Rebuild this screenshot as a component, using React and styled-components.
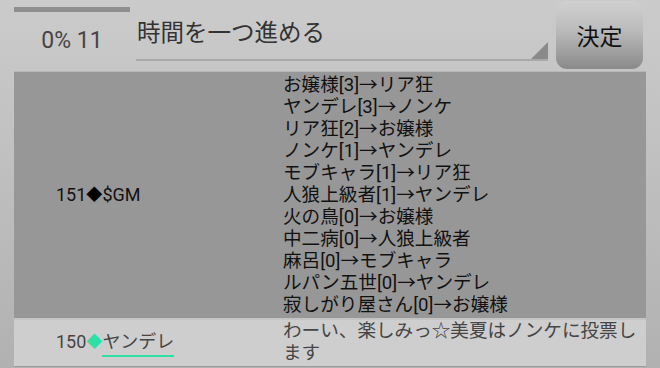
import React from 'react'
import styled, { createGlobalStyle } from 'styled-components'

const GlobalStyle = createGlobalStyle`
  html, body {
    margin: 0;
    padding: 0;
  }
  body {
    width: 660px;
    height: 368px;
    overflow: hidden;
    background: linear-gradient(#cbcbcb 0%, #c6c6c6 20%, #b1b1b1 100%);
    font-family: Roboto, "Noto Sans CJK JP", sans-serif;
  }
`

const Page = styled.div`
  padding: 0 14px;
`

const Header = styled.div`
  display: flex;
  align-items: stretch;
  height: 71px;
`

const Progress = styled.div`
  width: 122px;
  display: flex;
  flex-direction: column;
  align-items: center;
`

const ProgressTrack = styled.div`
  align-self: flex-start;
  margin-top: 7px;
  width: 116px;
  height: 5px;
  background: #8f8f8f;
`

const ProgressLabel = styled.div`
  margin-top: 15px;
  margin-right: 6px;
  font-size: 23px;
  color: #454545;
`

const Field = styled.div`
  position: relative;
  width: 412px;
  height: 61px;
  border-bottom: 2px solid #a9a9a9;
  box-sizing: border-box;
  font-family: "Noto Sans CJK JP", sans-serif;
  font-size: 23.5px;
  color: #333;
  padding-left: 1px;
`

const FieldText = styled.div`
  line-height: 1;
  margin-top: 20px;
`

const Corner = styled.div`
  position: absolute;
  right: 0;
  bottom: 0;
  width: 0;
  height: 0;
  border-left: 17px solid transparent;
  border-bottom: 17px solid #8a8a8a;
`

const Button = styled.button`
  margin: 1px 0 0 8px;
  width: 87px;
  height: 68px;
  border: none;
  border-radius: 11px;
  background: linear-gradient(#d0d0d0, #bdbdbd 40%, #8a8a8a);
  font-family: "Noto Sans CJK JP", sans-serif;
  font-size: 23px;
  color: #111;
  padding: 0;
`

const Table = styled.div`
  border-top: 1px solid #b8b8b8;
  border-bottom: 1px solid #9c9c9c;
  font-family: "Noto Sans CJK JP", sans-serif;
  font-size: 18.6px;
  line-height: 22px;
`

const Row = styled.div`
  display: grid;
  grid-template-columns: 269px 1fr;
  background: ${(p) => (p.$dark ? '#979797' : '#cecece')};
  color: ${(p) => (p.$dark ? '#111' : '#454545')};
  padding: ${(p) => (p.$dark ? '2px 0' : '0 0 2px')};
  & + & {
    border-top: 2px solid #c4c4c4;
  }
`

const Who = styled.div`
  display: flex;
  align-items: center;
  padding-left: 42px;
  font-family: Roboto, "Noto Sans CJK JP", sans-serif;
  font-size: 18px;
`

const Diamond = styled.span`
  color: ${(p) => p.$color};
  font-size: 16px;
`

const Name = styled.span`
  border-bottom: ${(p) => (p.$link ? '2px solid #2fe0a6' : 'none')};
  line-height: 22px;
  padding-bottom: ${(p) => (p.$link ? '2px' : '0')};
  margin-top: ${(p) => (p.$link ? '4px' : '0')};
`

const Body = styled.div`
  font-family: Roboto, "Noto Sans CJK JP", sans-serif;
  padding-right: 6px;
`

const votes = [
  'お嬢様[3]→リア狂',
  'ヤンデレ[3]→ノンケ',
  'リア狂[2]→お嬢様',
  'ノンケ[1]→ヤンデレ',
  'モブキャラ[1]→リア狂',
  '人狼上級者[1]→ヤンデレ',
  '火の鳥[0]→お嬢様',
  '中二病[0]→人狼上級者',
  '麻呂[0]→モブキャラ',
  'ルパン五世[0]→ヤンデレ',
  '寂しがり屋さん[0]→お嬢様',
]

export default function App() {
  return (
    <>
      <GlobalStyle />
      <Page>
        <Header>
          <Progress>
            <ProgressTrack />
            <ProgressLabel>0% 11</ProgressLabel>
          </Progress>
          <Field>
            <FieldText>時間を一つ進める</FieldText>
            <Corner />
          </Field>
          <Button>決定</Button>
        </Header>
        <Table>
          <Row $dark>
            <Who>
              151<Diamond $color="#000">◆</Diamond>$GM
            </Who>
            <Body>
              {votes.map((v) => (
                <div key={v}>{v}</div>
              ))}
            </Body>
          </Row>
          <Row>
            <Who>
              150<Diamond $color="#2fe0a6">◆</Diamond>
              <Name $link>ヤンデレ</Name>
            </Who>
            <Body>わーい、楽しみっ☆美夏はノンケに投票します</Body>
          </Row>
        </Table>
      </Page>
    </>
  )
}
